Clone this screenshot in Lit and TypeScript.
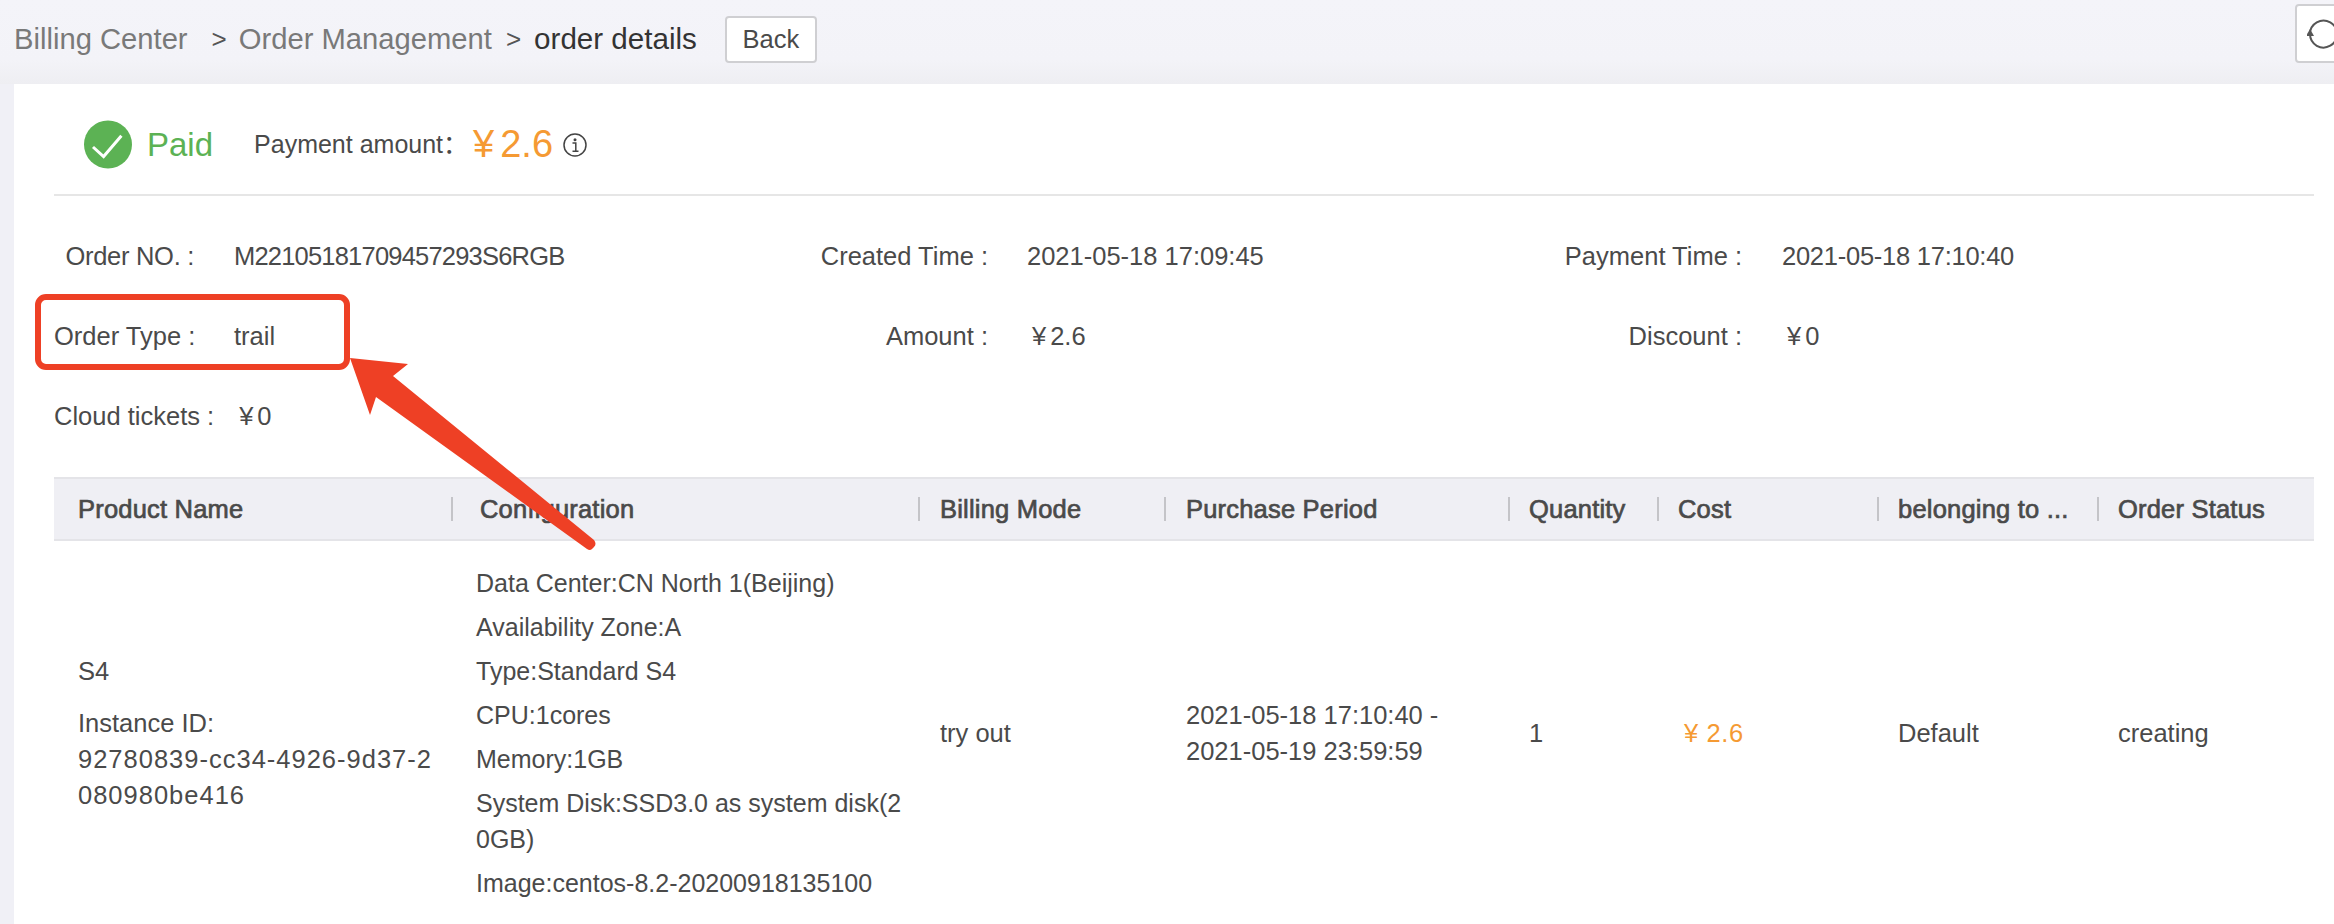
import { LitElement, html, css, svg } from "lit";
import { customElement } from "lit/decorators.js";

const FONT = css`"Liberation Sans", "Noto Sans CJK SC", Arial, sans-serif`;

const COLS = [
  { h: "Product Name", pad: 24 },
  { h: "Configuration", pad: 29 },
  { h: "Billing Mode", pad: 22 },
  { h: "Purchase Period", pad: 22 },
  { h: "Quantity", pad: 21 },
  { h: "Cost", pad: 21 },
  { h: "belonging to ...", pad: 21 },
  { h: "Order Status", pad: 21 },
];

const CONFIG = [
  "Data Center:CN North 1(Beijing)",
  "Availability Zone:A",
  "Type:Standard S4",
  "CPU:1cores",
  "Memory:1GB",
  "System Disk:SSD3.0 as system disk(20GB)",
  "Image:centos-8.2-20200918135100",
];

@customElement("app-root")
export class AppRoot extends LitElement {
  static styles = css`
    :host {
      display: block;
      height: 924px;
      overflow: hidden;
      font-family: ${FONT};
      font-size: 25.5px;
      color: #4a4a4a;
      background: #f0f0f6;
    }
    .page { position: relative; height: 924px; overflow: hidden; }

    .top {
      height: 84px;
      box-sizing: border-box;
      display: flex;
      align-items: center;
      padding-left: 14px;
      background: linear-gradient(#f4f4f9 0, #f3f3f8 60px, #eeeef2 84px);
    }
    .crumbs {
      display: flex;
      align-items: center;
      font-size: 29.2px;
      color: #797979;
      white-space: nowrap;
      margin-top: -6px;
    }
    .sep { color: #555; font-size: 26px; }
    .sep.a { margin: 0 12px 0 24px; }
    .sep.b { margin: 0 13px 0 14px; }
    .current { color: #333; font-size: 29.6px; }
    .back, .refresh {
      box-sizing: border-box;
      background: #fff;
      border: 2px solid #cfcfd2;
      border-radius: 4px;
      display: flex;
      align-items: center;
      justify-content: center;
      color: #4a4a4a;
      font: inherit;
      padding: 0;
    }
    .back { width: 92px; height: 47px; margin-left: 28px; margin-top: -5px; }
    .refresh {
      width: 60px;
      height: 59px;
      margin-left: auto;
      margin-right: -21px;
      margin-top: -17px;
    }
    .refresh svg { display: block; }

    .panel {
      margin-left: 14px;
      height: 840px;
      background: #fff;
      padding: 0 20px 0 40px;
    }
    .status {
      box-sizing: border-box;
      border-bottom: 2px solid #e6e6e6;
      height: 112px;
      display: flex;
      align-items: center;
      padding: 11px 0 0 30px;
    }
    .check { display: block; }
    .paid { color: #5cb254; font-size: 33px; margin-left: 15px; }
    .pay-label { margin-left: 41px; font-size: 25px; margin-top: -5px; }
    .amount { color: #f59a33; font-size: 38px; margin-left: 5px; }
    .amount i { font-style: normal; margin-right: 6px; }
    .info-icon { display: block; margin-left: 10px; }

    .info {
      margin-top: 20px;
      display: grid;
      grid-template-columns: 140px 594px 200px 554px 200px 1fr;
      grid-auto-rows: 80px;
      align-items: center;
      white-space: nowrap;
    }
    .label { text-align: right; }
    .label.caps { letter-spacing: -0.3px; }
    .val { padding-left: 39px; }
    .val.first { padding-left: 40px; }
    .val.no { letter-spacing: -0.8px; }
    .val.third { padding-left: 40px; }
    .val.tight { letter-spacing: -0.25px; }
    .yen i { font-style: normal; margin: 0 4px 0 5px; }
    .yen.plain i { margin-left: 1px; }
    .cloud { grid-column: 1 / 3; display: flex; gap: 24px; }

    .table {
      margin-top: 21px;
      display: grid;
      grid-template-columns: 397px 467px 246px 344px 149px 220px 220px 217px;
    }
    .th {
      height: 64px;
      box-sizing: border-box;
      background: #efeff4;
      border-top: 2px solid #e4e4e8;
      border-bottom: 2px solid #e4e4e8;
      display: flex;
      align-items: center;
      position: relative;
      -webkit-text-stroke: 0.7px #4a4a4a;
      letter-spacing: 0.2px;
      white-space: nowrap;
    }
    .th + .th::before {
      content: "";
      position: absolute;
      left: 0;
      top: 18px;
      height: 24px;
      width: 2px;
      background: #c4c4c8;
    }
    .td {
      display: flex;
      flex-direction: column;
      justify-content: center;
      line-height: 36px;
      padding: 25px 20px 25px 24px;
      box-sizing: border-box;
      min-width: 0;
      height: 383px;
    }
    .td p { margin: 0; word-break: break-all; }
    .prod { padding-right: 12px; }
    .id { letter-spacing: 1px; }
    .cfg { padding: 25px 15px 25px 25px; font-size: 25px; }
    .cfg p + p { margin-top: 8px; }
    .prod p + p { margin-top: 16px; }
    .mode, .period { padding-left: 22px; }
    .period { padding-right: 40px; }
    .qty, .owner, .state { padding-left: 21px; }
    .cost { padding-left: 27px; color: #f59a33; letter-spacing: 0.6px; }

    .highlight {
      position: absolute;
      left: 35px;
      top: 294px;
      width: 315px;
      height: 76px;
      box-sizing: border-box;
      border: 6px solid #ee4025;
      border-radius: 11px;
    }
    .arrow { position: absolute; left: 0; top: 0; pointer-events: none; }
  `;

  render() {
    return html`
      <div class="page">
        <div class="top">
          <div class="crumbs">
            <span>Billing Center</span>
            <span class="sep a">&gt;</span>
            <span>Order Management</span>
            <span class="sep b">&gt;</span>
            <span class="current">order details</span>
          </div>
          <button class="back">Back</button>
          <button class="refresh">
            <svg width="36" height="36" viewBox="0 0 36 36" fill="none">
              <path d="M3 18a13.500 13.500 0 1 1 0 .1" stroke="#555" stroke-width="2" />
              <path d="M-1 20 L3 13 L7 20 Z" fill="#555" />
            </svg>
          </button>
        </div>

        <div class="panel">
          <div class="status">
            <svg class="check" width="48" height="49" viewBox="0 0 48 49">
              <circle cx="24" cy="24.500" r="24" fill="#5cb254" />
              <path d="M9 27 L19.600 36.500 L37.400 15.700" fill="none" stroke="#fff" stroke-width="3" />
            </svg>
            <span class="paid">Paid</span>
            <span class="pay-label">Payment amount：</span>
            <span class="amount"><i>¥</i>2.6</span>
            <svg class="info-icon" width="24" height="24" viewBox="0 0 24 24" fill="none">
              <circle cx="12" cy="12" r="11" stroke="#444" stroke-width="1.500" />
              <circle cx="12" cy="6.800" r="1.500" fill="#444" />
              <path d="M9.500 10 H12.800 V18 M9.500 18.200 H15.500" stroke="#444" stroke-width="1.500" />
            </svg>
          </div>

          <div class="info">
            <span class="label caps">Order NO. :</span><span class="val first no">M22105181709457293S6RGB</span>
            <span class="label">Created Time :</span><span class="val">2021-05-18 17:09:45</span>
            <span class="label">Payment Time :</span><span class="val third tight">2021-05-18 17:10:40</span>

            <span class="label">Order Type :</span><span class="val first">trail</span>
            <span class="label">Amount :</span><span class="val yen"><i>¥</i>2.6</span>
            <span class="label">Discount :</span><span class="val third yen"><i>¥</i>0</span>

            <div class="cloud"><span>Cloud tickets :</span><span class="yen plain"><i>¥</i>0</span></div>
          </div>

          <div class="table">
            ${COLS.map(
              (c) => html`<div class="th" style="padding-left:${c.pad}px">${c.h}</div>`
            )}
            <div class="td prod">
              <p>S4</p>
              <p>Instance ID:<br /><span class="id">92780839-cc34-4926-9d37-2080980be416</span></p>
            </div>
            <div class="td cfg">${CONFIG.map((l) => html`<p>${l}</p>`)}</div>
            <div class="td mode">try out</div>
            <div class="td period">2021-05-18 17:10:40 - 2021-05-19 23:59:59</div>
            <div class="td qty">1</div>
            <div class="td cost">¥ 2.6</div>
            <div class="td owner">Default</div>
            <div class="td state">creating</div>
          </div>
        </div>

        <div class="highlight"></div>
        <svg class="arrow" width="2334" height="924" viewBox="0 0 2334 924">
          ${svg`<path d="M350 358 L408 364 L393 376 L594 540 Q597 544 594 547 L592 549 Q590 551 587 549 L376 397 L370 415 Z" fill="#ee4025" />`}
        </svg>
      </div>
    `;
  }
}
